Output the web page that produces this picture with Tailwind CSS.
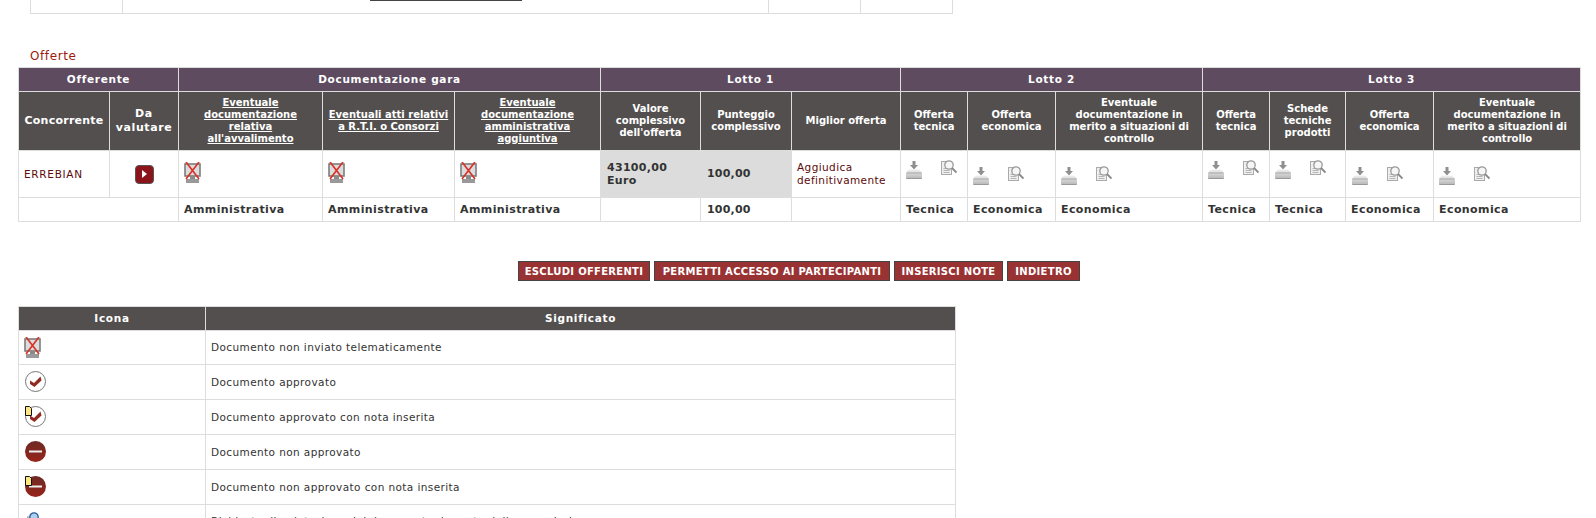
<!DOCTYPE html>
<html lang="it">
<head>
  <meta charset="UTF-8" />
  <title>Offerte</title>
  <script src="https://cdn.jsdelivr.net/npm/@tailwindcss/browser@4"></script>
</head>
<body class="bg-white text-[#333] font-['DejaVu_Sans',Verdana,sans-serif] text-[10.5px] tracking-[0.4px] h-[518px] overflow-hidden">
  <svg class="absolute w-0 h-0">
    <defs>
      <linearGradient id="tray" x1="0" y1="0" x2="0" y2="1"><stop offset="0" stop-color="#f0f0f0"/><stop offset="1" stop-color="#b4b4b4"/></linearGradient>
      <linearGradient id="red" x1="0" y1="0" x2="0" y2="1"><stop offset="0" stop-color="#6e2a26"/><stop offset="1" stop-color="#96241a"/></linearGradient>
    </defs>
    <symbol id="pc" viewBox="0 0 17 21">
      <rect x="1" y="2" width="15" height="12" fill="#dcdcdc" stroke="#7d7d7d" stroke-width="1.600"/>
      <rect x="6" y="14" width="5" height="3" fill="#8a8a8a"/>
      <rect x="2" y="17" width="13" height="4" fill="#999"/>
      <path d="M2 0 15 17M15 0 2 17" stroke="#d8342a" stroke-width="1.700" fill="none"/>
    </symbol>
    <symbol id="down" viewBox="0 0 16 18">
      <path d="M6.500 0h3v4h2.500L8 8.500 4 4h2.500z" fill="#8f8f8f"/>
      <path d="M3 8.500h10l3 3v5.500a1 1 0 0 1-1 1H1a1 1 0 0 1-1-1v-5.500z" fill="url(#tray)"/>
      <path d="M.5 12h15" stroke="#9a9a9a" stroke-width=".8"/>
      <path d="M.5 17.500h15" stroke="#999"/>
    </symbol>
    <symbol id="lens" viewBox="0 0 16 15">
      <rect x=".5" y="1.500" width="10" height="13" fill="#efefef" stroke="#aaa"/>
      <path d="M2.500 8.500h5M2.500 10.500h6M2.500 12.500h6" stroke="#b5b5b5"/>
      <circle cx="8" cy="5" r="4.200" fill="#f6f6f6" stroke="#999" stroke-width="1.300"/>
      <path d="M11 8l4.500 4.500" stroke="#888" stroke-width="1.800"/>
    </symbol>
    <symbol id="find" viewBox="0 0 12 15">
      <rect x="0" y="5" width="6" height="10" fill="#ddd" stroke="#999"/>
      <circle cx="7" cy="5" r="4.200" fill="#a9d2f5" stroke="#2d5a96" stroke-width="1.300"/>
    </symbol>
    <symbol id="ok" viewBox="0 0 21 21">
      <circle cx="10.500" cy="10.500" r="10" fill="#fff" stroke="#777"/>
      <path d="M5 9.500l4 2.500 6.500-6.500 1 4L9.500 16 5 13z" fill="#912b22"/>
    </symbol>
    <symbol id="no" viewBox="0 0 21 21">
      <circle cx="10.500" cy="10.500" r="10.500" fill="url(#red)"/>
      <rect x="4" y="9.500" width="13" height="2" fill="#eee"/>
    </symbol>
    <symbol id="note" viewBox="0 0 7 10">
      <path d="M.5.500h4l2 2v7h-6z" fill="#ffe680" stroke="#111"/>
    </symbol>
  </svg>

  <!-- resto della tabella precedente -->
  <div class="ml-[30px] w-[923px] h-[14px] flex border-b border-x border-[#ddd]">
    <div class="w-[92px] border-r border-[#ddd]"></div>
    <div class="flex-1 border-r border-[#ddd] flex justify-center"><div class="w-[152px] h-px bg-[#444]"></div></div>
    <div class="w-[92px] border-r border-[#ddd]"></div>
    <div class="w-[91px]"></div>
  </div>

  <h2 class="ml-[30px] mt-[36px] h-[17px] leading-[12px] text-[12px] tracking-[0.6px] text-[#9c1b0b]">Offerte</h2>

  <table class="ml-[18px] w-[1562px] table-fixed border-collapse">
    <colgroup>
      <col class="w-[91px]"/><col class="w-[69px]"/><col class="w-[144px]"/><col class="w-[132px]"/><col class="w-[146px]"/><col class="w-[100px]"/><col class="w-[91px]"/><col class="w-[109px]"/><col class="w-[67px]"/><col class="w-[88px]"/><col class="w-[147px]"/><col class="w-[67px]"/><col class="w-[76px]"/><col class="w-[88px]"/><col class="w-[147px]"/>
    </colgroup>
    <thead>
      <tr class="h-[24px] bg-[#5e4b60] text-white font-bold text-[10.5px] tracking-[0.7px]">
        <th colspan="2" class="border border-[#ddd] pt-px">Offerente</th>
        <th colspan="3" class="border border-[#ddd] pt-px">Documentazione gara</th>
        <th colspan="3" class="border border-[#ddd] pt-px">Lotto 1</th>
        <th colspan="3" class="border border-[#ddd] pt-px">Lotto 2</th>
        <th colspan="4" class="border border-[#ddd] pt-px">Lotto 3</th>
      </tr>
      <tr class="h-[59px] bg-[#534f4e] text-white text-[10px] leading-[12px] tracking-normal">
        <th class="border border-[#ddd] text-[11px] tracking-[0.25px]">Concorrente</th>
        <th class="border border-[#ddd] text-[11px] tracking-[0.6px] leading-[14px]">Da<br/>valutare</th>
        <th class="border border-[#ddd] underline">Eventuale<br/>documentazione<br/>relativa<br/>all'avvalimento</th>
        <th class="border border-[#ddd] underline">Eventuali atti relativi<br/>a R.T.I. o Consorzi</th>
        <th class="border border-[#ddd] underline">Eventuale<br/>documentazione<br/>amministrativa<br/>aggiuntiva</th>
        <th class="border border-[#ddd]">Valore complessivo dell'offerta</th>
        <th class="border border-[#ddd]">Punteggio complessivo</th>
        <th class="border border-[#ddd]">Miglior offerta</th>
        <th class="border border-[#ddd]">Offerta tecnica</th>
        <th class="border border-[#ddd]">Offerta economica</th>
        <th class="border border-[#ddd]">Eventuale documentazione in merito a situazioni di controllo</th>
        <th class="border border-[#ddd]">Offerta tecnica</th>
        <th class="border border-[#ddd]">Schede tecniche prodotti</th>
        <th class="border border-[#ddd]">Offerta economica</th>
        <th class="border border-[#ddd]">Eventuale documentazione in merito a situazioni di controllo</th>
      </tr>
    </thead>
    <tbody>
      <tr class="h-[47px]">
        <td class="border border-[#ddd] pl-[5px] pt-px text-[#5c0a0a] tracking-[0.7px]">ERREBIAN</td>
        <td class="border border-[#ddd]">
          <div class="mx-auto w-[19px] h-[19px] rounded-[4px] bg-[#8a141a] border border-[#555] flex items-center justify-center">
            <div class="border-l-[5px] border-l-white border-y-[4px] border-y-transparent"></div>
          </div>
        </td>
        <td class="border border-[#ddd] pl-[5px] align-top pt-[11px]"><svg class="w-[17px] h-[21px]"><use href="#pc"/></svg></td>
        <td class="border border-[#ddd] pl-[5px] align-top pt-[11px]"><svg class="w-[17px] h-[21px]"><use href="#pc"/></svg></td>
        <td class="border border-[#ddd] pl-[5px] align-top pt-[11px]"><svg class="w-[17px] h-[21px]"><use href="#pc"/></svg></td>
        <td class="border border-[#ddd] bg-[#dcdcdc] pl-[6px] font-bold text-[11px] leading-[13px] tracking-[0.3px]">43100,00 Euro</td>
        <td class="border border-[#ddd] bg-[#dcdcdc] pl-[6px] pt-px font-bold text-[11px] tracking-[0.2px]">100,00</td>
        <td class="border border-[#ddd] pl-[5px] text-[#5c0a0a] leading-[13px]">Aggiudica definitivamente</td>
        <td class="border border-[#ddd] pl-[5px] align-top pt-[9px]"><div class="flex gap-[20px] items-start"><svg class="w-[16px] h-[18px] mt-px"><use href="#down"/></svg><svg class="w-[16px] h-[15px] -ml-px"><use href="#lens"/></svg></div></td>
        <td class="border border-[#ddd] pl-[5px] align-top pt-[15px]"><div class="flex gap-[19px] items-start"><svg class="w-[16px] h-[18px] mt-px"><use href="#down"/></svg><svg class="w-[16px] h-[15px]"><use href="#lens"/></svg></div></td>
        <td class="border border-[#ddd] pl-[5px] align-top pt-[15px]"><div class="flex gap-[19px] items-start"><svg class="w-[16px] h-[18px] mt-px"><use href="#down"/></svg><svg class="w-[16px] h-[15px]"><use href="#lens"/></svg></div></td>
        <td class="border border-[#ddd] pl-[5px] align-top pt-[9px]"><div class="flex gap-[19px] items-start"><svg class="w-[16px] h-[18px] mt-px"><use href="#down"/></svg><svg class="w-[16px] h-[15px]"><use href="#lens"/></svg></div></td>
        <td class="border border-[#ddd] pl-[5px] align-top pt-[9px]"><div class="flex gap-[19px] items-start"><svg class="w-[16px] h-[18px] mt-px"><use href="#down"/></svg><svg class="w-[16px] h-[15px]"><use href="#lens"/></svg></div></td>
        <td class="border border-[#ddd] pl-[6px] align-top pt-[15px]"><div class="flex gap-[19px] items-start"><svg class="w-[16px] h-[18px] mt-px"><use href="#down"/></svg><svg class="w-[16px] h-[15px]"><use href="#lens"/></svg></div></td>
        <td class="border border-[#ddd] pl-[5px] align-top pt-[15px]"><div class="flex gap-[19px] items-start"><svg class="w-[16px] h-[18px] mt-px"><use href="#down"/></svg><svg class="w-[16px] h-[15px]"><use href="#lens"/></svg></div></td>
      </tr>
      <tr class="h-[24px] font-bold text-[11px] tracking-[0.4px]">
        <td colspan="2" class="border border-[#ddd]"></td>
        <td class="border border-[#ddd] pl-[5px] pt-[2px]">Amministrativa</td>
        <td class="border border-[#ddd] pl-[5px] pt-[2px]">Amministrativa</td>
        <td class="border border-[#ddd] pl-[5px] pt-[2px]">Amministrativa</td>
        <td class="border border-[#ddd]"></td>
        <td class="border border-[#ddd] pl-[6px] pt-[2px] tracking-[0.2px]">100,00</td>
        <td class="border border-[#ddd]"></td>
        <td class="border border-[#ddd] pl-[5px] pt-[2px]">Tecnica</td>
        <td class="border border-[#ddd] pl-[5px] pt-[2px]">Economica</td>
        <td class="border border-[#ddd] pl-[5px] pt-[2px]">Economica</td>
        <td class="border border-[#ddd] pl-[5px] pt-[2px]">Tecnica</td>
        <td class="border border-[#ddd] pl-[5px] pt-[2px]">Tecnica</td>
        <td class="border border-[#ddd] pl-[5px] pt-[2px]">Economica</td>
        <td class="border border-[#ddd] pl-[5px] pt-[2px]">Economica</td>
      </tr>
    </tbody>
  </table>

  <div class="mt-[39px] ml-[518px] flex gap-[4px] text-white font-bold text-[10px] tracking-[0.3px]">
    <button class="w-[132px] h-[20px] bg-[#993333] border border-[#444]">ESCLUDI OFFERENTI</button>
    <button class="w-[236px] h-[20px] bg-[#993333] border border-[#444]">PERMETTI ACCESSO AI PARTECIPANTI</button>
    <button class="w-[109px] h-[20px] bg-[#993333] border border-[#444]">INSERISCI NOTE</button>
    <button class="w-[73px] h-[20px] bg-[#993333] border border-[#444]">INDIETRO</button>
  </div>

  <table class="mt-[25px] ml-[18px] w-[937px] table-fixed border-collapse">
    <colgroup><col class="w-[187px]"/><col class="w-[750px]"/></colgroup>
    <thead>
      <tr class="h-[24px] bg-[#534f4e] text-white font-bold tracking-[0.7px]">
        <th class="border border-[#ddd]">Icona</th>
        <th class="border border-[#ddd]">Significato</th>
      </tr>
    </thead>
    <tbody>
      <tr class="h-[34px]">
        <td class="border border-[#ddd] pl-[5px] align-top pt-[6px]"><svg class="w-[17px] h-[21px]"><use href="#pc"/></svg></td>
        <td class="border border-[#ddd] pl-[5px]">Documento non inviato telematicamente</td>
      </tr>
      <tr class="h-[35px]">
        <td class="border border-[#ddd] pl-[6px] align-top pt-[6px]"><svg class="w-[21px] h-[21px]"><use href="#ok"/></svg></td>
        <td class="border border-[#ddd] pl-[5px] pt-[2px]">Documento approvato</td>
      </tr>
      <tr class="h-[35px]">
        <td class="border border-[#ddd] pl-[6px] align-top pt-[6px]"><div class="relative w-[21px] h-[21px]"><svg class="w-[21px] h-[21px]"><use href="#ok"/></svg><svg class="absolute left-0 top-0 w-[7px] h-[10px]"><use href="#note"/></svg></div></td>
        <td class="border border-[#ddd] pl-[5px] pt-px">Documento approvato con nota inserita</td>
      </tr>
      <tr class="h-[35px]">
        <td class="border border-[#ddd] pl-[6px] align-top pt-[6px]"><svg class="w-[21px] h-[21px]"><use href="#no"/></svg></td>
        <td class="border border-[#ddd] pl-[5px] pt-px">Documento non approvato</td>
      </tr>
      <tr class="h-[35px]">
        <td class="border border-[#ddd] pl-[6px] align-top pt-[6px]"><div class="relative w-[21px] h-[21px]"><svg class="w-[21px] h-[21px]"><use href="#no"/></svg><svg class="absolute left-0 top-0 w-[7px] h-[10px]"><use href="#note"/></svg></div></td>
        <td class="border border-[#ddd] pl-[5px] pt-px">Documento non approvato con nota inserita</td>
      </tr>
      <tr class="h-[35px]">
        <td class="border border-[#ddd] pl-[8px] align-top pt-[7px]"><svg class="w-[12px] h-[15px]"><use href="#find"/></svg></td>
        <td class="border border-[#ddd] pl-[5px]">Richiesta di valutazione del documento da parte della commissione</td>
      </tr>
    </tbody>
  </table>
</body>
</html>
